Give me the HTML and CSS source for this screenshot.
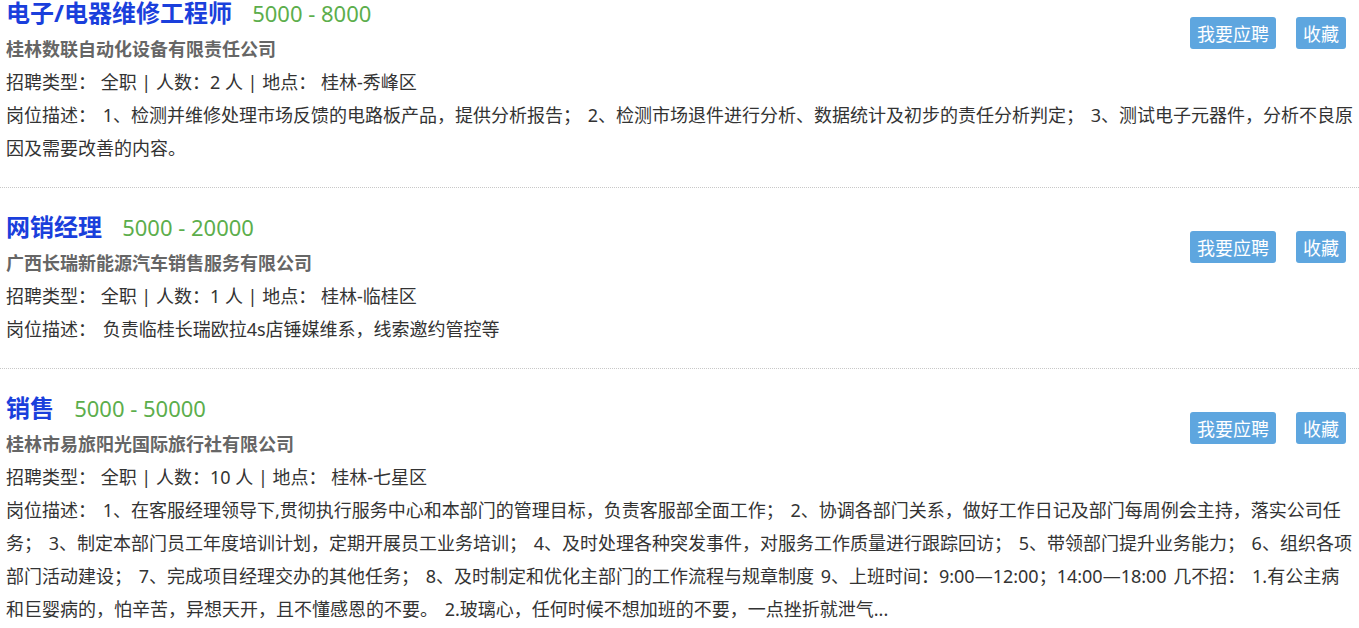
FILE: index.html
```html
<!DOCTYPE html>
<html lang="zh-CN">
<head>
  <meta charset="UTF-8">
  <title>招聘信息</title>
  <link rel="stylesheet" href="styles.css">
</head>
<body>

  <div class="lista">

    <div class="puesto">
      <div class="acciones">
        <button class="boton">我要应聘</button>
        <button class="boton">收藏</button>
      </div>
      <div class="titulo">
        <a class="nombre" href="#">电子/电器维修工程师</a>
        <span class="salario">5000 - 8000</span>
      </div>
      <div class="empresa">桂林数联自动化设备有限责任公司</div>
      <div class="datos">招聘类型： 全职 | 人数：2 人 | 地点： 桂林-秀峰区</div>
      <div class="descripcion">岗位描述： 1、检测并维修处理市场反馈的电路板产品，提供分析报告； 2、检测市场退件进行分析、数据统计及初步的责任分析判定； 3、测试电子元器件，分析不良原因及需要改善的内容。</div>
    </div>

    <div class="puesto">
      <div class="acciones">
        <button class="boton">我要应聘</button>
        <button class="boton">收藏</button>
      </div>
      <div class="titulo">
        <a class="nombre" href="#">网销经理</a>
        <span class="salario">5000 - 20000</span>
      </div>
      <div class="empresa">广西长瑞新能源汽车销售服务有限公司</div>
      <div class="datos">招聘类型： 全职 | 人数：1 人 | 地点： 桂林-临桂区</div>
      <div class="descripcion">岗位描述： 负责临桂长瑞欧拉4s店锤媒维系，线索邀约管控等</div>
    </div>

    <div class="puesto">
      <div class="acciones">
        <button class="boton">我要应聘</button>
        <button class="boton">收藏</button>
      </div>
      <div class="titulo">
        <a class="nombre" href="#">销售</a>
        <span class="salario">5000 - 50000</span>
      </div>
      <div class="empresa">桂林市易旅阳光国际旅行社有限公司</div>
      <div class="datos">招聘类型： 全职 | 人数：10 人 | 地点： 桂林-七星区</div>
      <div class="descripcion">岗位描述： 1、在客服经理领导下,贯彻执行服务中心和本部门的管理目标，负责客服部全面工作； 2、协调各部门关系，做好工作日记及部门每周例会主持，落实公司任务； 3、制定本部门员工年度培训计划，定期开展员工业务培训； 4、及时处理各种突发事件，对服务工作质量进行跟踪回访； 5、带领部门提升业务能力； 6、组织各项部门活动建设； 7、完成项目经理交办的其他任务； 8、及时制定和优化主部门的工作流程与规章制度 9、上班时间：9:00—12:00；14:00—18:00 几不招： 1.有公主病和巨婴病的，怕辛苦，异想天开，且不懂感恩的不要。 2.玻璃心，任何时候不想加班的不要，一点挫折就泄气...</div>
    </div>

  </div>

</body>
</html>
```

FILE: styles.css
```css
body {
  font-family: "Noto Sans", "Noto Sans CJK SC", sans-serif;
  background-color: #fff;
  color: #333;
  margin: 0;
}

.lista {
  margin-top: -26px;
}

.puesto {
  padding: 22px 4px 22px 6px;
  border-bottom: 1px dotted #c8c8c8;
}

.acciones {
  float: right;
  display: flex;
  gap: 20px;
  margin-top: 21px;
  margin-right: 9px;
}

.boton {
  font-family: "Noto Sans CJK SC", sans-serif;
  font-size: 18px;
  line-height: 32px;
  height: 32px;
  padding: 0 7px;
  background-color: #5ea6df;
  color: #fff;
  border: none;
  border-radius: 3px;
  cursor: pointer;
}

.titulo {
  line-height: 34px;
}

.nombre {
  font-size: 24px;
  font-weight: bold;
  color: #1a3fdc;
  text-decoration: none;
  margin-right: 16px;
}

.salario {
  font-size: 22px;
  color: #5cae4c;
}

.empresa {
  font-size: 18px;
  font-weight: bold;
  color: #666;
  line-height: 33px;
}

.datos,
.descripcion {
  font-size: 18px;
  line-height: 33px;
}

.descripcion {
  word-spacing: 2px;
}
```
